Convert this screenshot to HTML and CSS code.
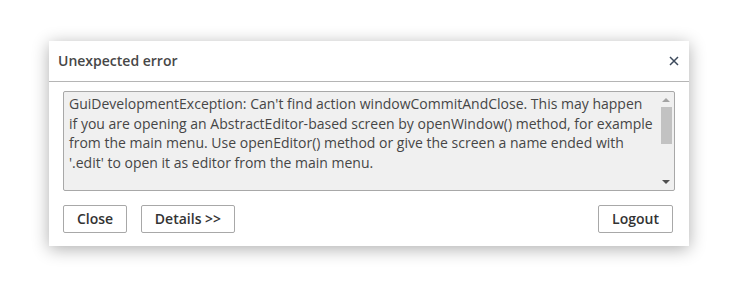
FILE: index.html
```html
<!DOCTYPE html>
<html>
<head>
<meta charset="utf-8">
<link rel="stylesheet" href="styles.css">
</head>
<body>
<div class="dialog">
  <div class="header">
    <div class="title">Unexpected error</div>
    <div class="close-x">
      <svg width="10" height="10" viewBox="0 0 10 10"><path d="M1 1 L9 9 M9 1 L1 9" stroke="#3d4a5c" stroke-width="1.5" fill="none"/></svg>
    </div>
  </div>
  <div class="content">
    <div class="textbox">
      <div class="text">GuiDevelopmentException: Can't find action windowCommitAndClose. This may happen if you are opening an AbstractEditor-based screen by openWindow() method, for example from the main menu. Use openEditor() method or give the screen a name ended with '.edit' to open it as editor from the main menu.</div>
      <div class="scrollbar">
        <div class="arrow up"></div>
        <div class="thumb"></div>
        <div class="track"></div>
        <div class="arrow down"></div>
      </div>
    </div>
    <div class="buttons">
      <button class="btn btn-close">Close</button>
      <button class="btn btn-details">Details &gt;&gt;</button>
      <div class="spacer"></div>
      <button class="btn btn-logout">Logout</button>
    </div>
  </div>
</div>
</body>
</html>
```

FILE: styles.css
```css
html, body {
  margin: 0;
  padding: 0;
  background: #ffffff;
}
html {
  height: 100%;
}
body {
  box-sizing: border-box;
  min-height: 100%;
  padding: 41px 0 0 49px;
  font-family: "Open Sans", "Liberation Sans", sans-serif;
  color: #464646;
}
.dialog {
  width: 640px;
  height: 205px;
  background: #ffffff;
  box-shadow: 0 3px 16px rgba(0, 0, 0, 0.32);
  display: flex;
  flex-direction: column;
}
.header {
  height: 40px;
  border-bottom: 1px solid #b5b5b5;
  display: flex;
  align-items: center;
  padding: 0 10px 0 9px;
}
.title {
  flex: 1;
  font-size: 14px;
  font-weight: 600;
  color: #474747;
  padding-bottom: 1px;
}
.close-x {
  width: 10px;
  height: 10px;
  display: flex;
}
.content {
  padding: 9px 14px 0 14px;
}
.textbox {
  height: 98px;
  border: 1px solid #a8a8a8;
  border-radius: 2px;
  background: #f0f0f0;
  display: flex;
}
.text {
  flex: 1;
  font-size: 14px;
  line-height: 19.6px;
  padding: 2px 6px 0 5px;
  color: #464646;
}
.scrollbar {
  width: 14px;
  display: flex;
  flex-direction: column;
  align-items: center;
  padding-right: 1px;
}
.arrow {
  width: 0;
  height: 0;
  border-left: 4px solid transparent;
  border-right: 4px solid transparent;
}
.arrow.up {
  margin-top: 6px;
  border-bottom: 4px solid #a3a3a3;
}
.arrow.down {
  margin-bottom: 6px;
  border-top: 4px solid #505050;
}
.thumb {
  margin-top: 5px;
  width: 11px;
  height: 37px;
  background: #c2c2c2;
}
.track {
  flex: 1;
}
.buttons {
  display: flex;
  margin-top: 14px;
  padding-right: 2px;
  gap: 14px;
}
.spacer {
  flex: 1;
}
.btn {
  height: 28px;
  border: 1px solid #a8a8a8;
  border-radius: 2px;
  background: #ffffff;
  font-family: "Open Sans", "Liberation Sans", sans-serif;
  font-size: 14px;
  font-weight: 600;
  color: #333333;
  padding: 0 0 1px 0;
}
.btn-close { width: 64px; }
.btn-details { width: 94px; }
.btn-logout { width: 75px; }
```
